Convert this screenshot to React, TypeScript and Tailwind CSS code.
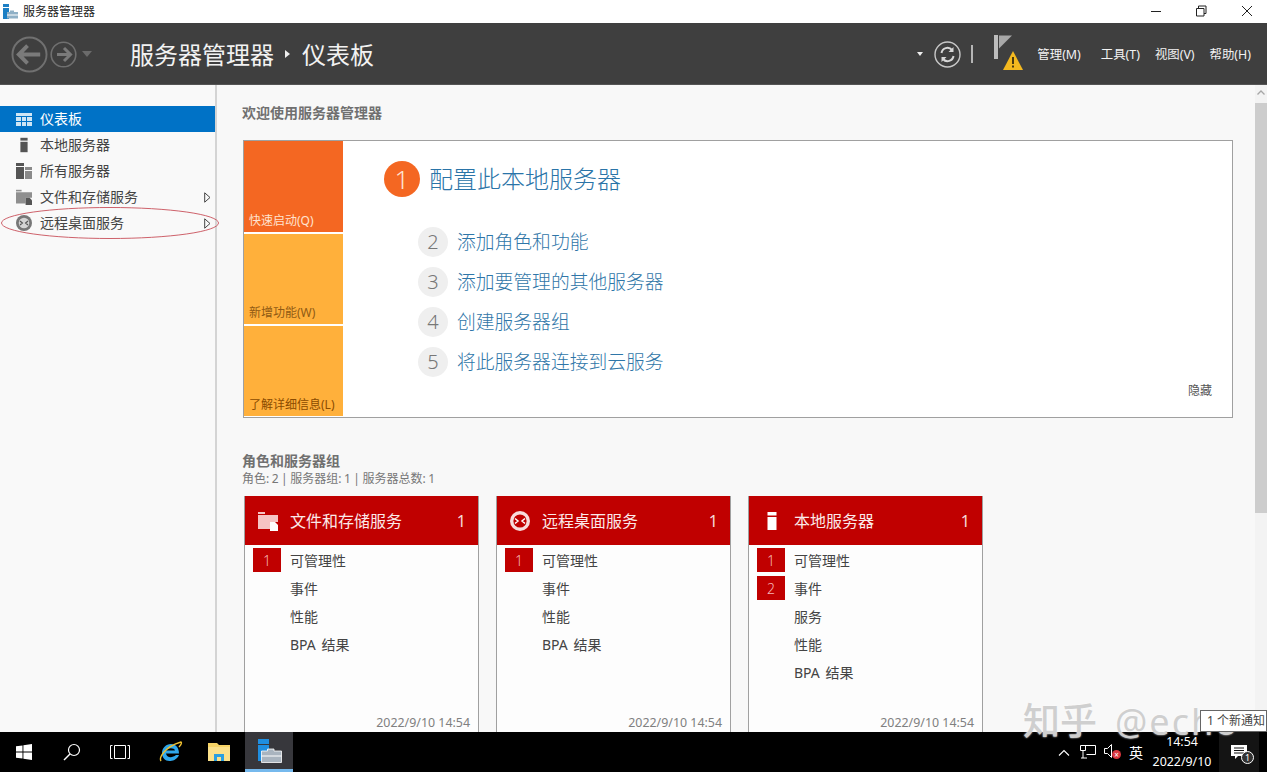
import React from "react";

const Server = ({ c = "#fff", className = "" }: { c?: string; className?: string }) => (
  <svg className={className} width="10" height="18" viewBox="0 0 10 18">
    <rect x="0.5" y="0" width="9" height="3.5" fill={c} />
    <rect x="0.5" y="5" width="9" height="13" fill={c} />
  </svg>
);

const FilesIcon = ({ a, b, size }: { a: string; b: string; size: number }) => (
  <svg width={size} height={size} viewBox="0 0 20 20">
    <path d="M0 1h7v2h-7z" fill={a} />
    <path d="M0 4h20v7h-8v7h-12z" fill={a} />
    <path d="M12 11h5l3 3v6h-8z" fill={b} />
  </svg>
);

const RemoteIcon = ({ ring, inner, arrow, size }: { ring: string; inner: string; arrow: string; size: number }) => (
  <svg width={size} height={size} viewBox="0 0 20 20">
    <circle cx="10" cy="10" r="10" fill={ring} />
    <circle cx="10" cy="10" r="6.6" fill={inner} />
    <path d="M5 7.500l3 2.500-3 2.500M15 7.500l-3 2.500 3 2.500" stroke={arrow} strokeWidth="1.5" fill="none" />
  </svg>
);

const Watermark = () => (
  <div className="pointer-events-none absolute left-[1023px] top-[703px] z-20 flex items-baseline whitespace-nowrap leading-[36px] text-[#cfcfcf] [text-shadow:0_0_2px_#ffffff]">
    <span className="text-[37px] font-medium">知乎</span>
    <span className="ml-[18px] text-[36px] tracking-[2px]">@echo</span>
  </div>
);

function SideItem({ icon, label, active, arrow }: { icon: React.ReactNode; label: string; active?: boolean; arrow?: boolean }) {
  return (
    <div className={`flex h-[26px] items-center ${active ? "bg-[#0072c6] text-white" : "text-[#444]"}`}>
      <div className="flex w-[40px] justify-center pl-[8px]">{icon}</div>
      <span className="flex-1 text-[14px] leading-[26px]">{label}</span>
      {arrow && (
        <svg className="mr-[4px]" width="7" height="11" viewBox="0 0 7 11">
          <path d="M0.7 0.8L6 5.5L0.7 10.2Z" fill="none" stroke="#444" strokeWidth="1" />
        </svg>
      )}
    </div>
  );
}

function Step({ n, label }: { n: number; label: string }) {
  return (
    <div className="flex h-[40px] items-center pl-[75px]">
      <div className="flex h-[30px] w-[30px] items-center justify-center rounded-full bg-[#efefef] text-[20px] font-light text-[#777]">{n}</div>
      <span className="ml-[9px] text-[18.8px] font-light text-[#2f76a8]">{label}</span>
    </div>
  );
}

function Card({ title, icon, rows }: { title: string; icon: React.ReactNode; rows: [string, number?][] }) {
  return (
    <div className="flex h-[250px] w-[235px] flex-col border-x border-[#a0a0a0] bg-[#fdfdfd]">
      <div className="flex h-[49px] items-center bg-[#c00000] text-white">
        <div className="flex w-[45px] justify-center pl-[1px]">{icon}</div>
        <span className="flex-1 text-[16px] text-[#fbe9e9]">{title}</span>
        <span className="mr-[12px] text-[16px] text-[#f6d9d9]">1</span>
      </div>
      <div className="flex flex-1 flex-col pt-[1px]">
        {rows.map(([r, n]) => (
          <div key={r} className="flex h-[28px] items-center text-[14px] text-[#444] [word-spacing:2px]">
            <div className="ml-[8px] flex h-[24px] w-[28px] items-center justify-center text-[14px] font-light">
              {n ? <span className="flex h-[24px] w-[28px] items-center justify-center bg-[#c00000] text-[#f7b5b5]">{n}</span> : null}
            </div>
            <span className="ml-[9px]">{r}</span>
          </div>
        ))}
        <div className="mt-auto mb-[14px] mr-[8px] text-right text-[12.4px] leading-[18px] text-[#808080]">2022/9/10 14:54</div>
      </div>
    </div>
  );
}

function Tile({ label, color, text, h }: { label: string; color: string; text: string; h: string }) {
  return (
    <div className={`flex ${h} items-end pb-[3px] pl-[5px] text-[12px] leading-[16px] ${color} ${text}`}>{label}</div>
  );
}

export default function App() {
  return (
    <div className="relative flex h-[772px] w-[1267px] flex-col overflow-hidden bg-white font-['Noto_Sans','Noto_Sans_CJK_SC',sans-serif]">
      {/* Title bar */}
      <div className="flex h-[23px] shrink-0 items-center bg-white pl-[3px]">
        <svg width="15" height="15" viewBox="0 0 15 15">
          <rect x="0" y="0" width="6" height="3" fill="#1c7fc4" />
          <rect x="0" y="4" width="6" height="11" fill="#1c7fc4" />
          <path d="M4 8h3v-1.500h4v1.500h4v6.500h-11z" fill="#8fb0c6" />
          <path d="M4 11h11" stroke="#fff" />
        </svg>
        <span className="ml-[5px] text-[12px] text-[#222]">服务器管理器</span>
        <div className="ml-auto flex items-center">
          <svg width="46" height="14" viewBox="0 0 46 14"><path d="M22 6.500h10" stroke="#222" /></svg>
          <svg width="46" height="14" viewBox="0 0 46 14"><path d="M21.500 3.500h7.500v7.500h-7.500zM23.500 3.500v-2.500h7.500v7.500h-2" fill="none" stroke="#222" /></svg>
          <svg width="46" height="14" viewBox="0 0 46 14"><path d="M21 1l10 10M31 1l-10 10" stroke="#222" /></svg>
        </div>
      </div>

      {/* Header */}
      <div className="flex h-[62px] shrink-0 items-center border-b border-[#555] bg-[#3f3f3f] pl-[11px] pt-[1px] text-white">
        <svg width="37" height="37" viewBox="0 0 38 38">
          <circle cx="19" cy="19" r="17.5" fill="none" stroke="#707070" strokeWidth="2" />
          <path d="M8 19h22M17 10l-9 9 9 9" fill="none" stroke="#7a7a7a" strokeWidth="4" />
        </svg>
        <svg className="ml-[2px]" width="27" height="27" viewBox="0 0 27 27">
          <circle cx="13.500" cy="13.500" r="12.300" fill="none" stroke="#707070" strokeWidth="1.600" />
          <path d="M20 13.500h-13M14 7l6.500 6.500-6.500 6.500" fill="none" stroke="#7a7a7a" strokeWidth="3" />
        </svg>
        <svg className="ml-[5px]" width="10" height="6" viewBox="0 0 10 6"><path d="M0 0h10l-5 6z" fill="#6b6b6b" /></svg>
        <span className="ml-[38px] mt-[2px] text-[24px] leading-[32px] text-[#f2f2f2]">服务器管理器</span>
        <svg className="ml-[11px] mr-[12px]" width="5" height="8" viewBox="0 0 5 8"><path d="M0 0l5 4-5 4z" fill="#eee" /></svg>
        <span className="mt-[2px] text-[24px] leading-[32px] text-[#f2f2f2]">仪表板</span>
        <svg className="ml-auto" width="6" height="4" viewBox="0 0 6 4"><path d="M0 0h6l-3 4z" fill="#eee" /></svg>
        <svg className="ml-[11px]" width="27" height="27" viewBox="0 0 27 27">
          <circle cx="13.500" cy="13.500" r="12.500" fill="none" stroke="#c8c8c8" strokeWidth="1.400" />
          <path d="M7.500 12a6 6 0 0 1 10.500-3M19.500 15a6 6 0 0 1-10.500 3" fill="none" stroke="#d8d8d8" strokeWidth="2" />
          <path d="M19.500 6v5h-5zM7.500 21v-5h5z" fill="#d8d8d8" />
        </svg>
        <div className="ml-[10px] h-[18px] w-[2px] bg-[#b5b5b5]" />
        <div className="relative ml-[21px] h-[36px] w-[30px]">
          <svg width="18" height="24" viewBox="0 0 18 24" className="absolute left-0 top-[-1px]">
            <rect x="0" y="0" width="4" height="24" fill="#bdbdbd" />
            <path d="M5 0.500h13l-13 13z" fill="#a8a8a8" />
          </svg>
          <svg width="20" height="19" viewBox="0 0 20 19" className="absolute left-[9px] top-[15px]">
            <path d="M10 0l10 19h-20z" fill="#f4b91f" />
            <path d="M9 6h2v7h-2zM9 14.500h2v2h-2z" fill="#4a3a10" />
          </svg>
        </div>
        <div className="ml-[13px] mt-[2px] flex text-[12.4px] text-[#f2f2f2]">
          <span>管理(M)</span>
          <span className="ml-[20px]">工具(T)</span>
          <span className="ml-[15px]">视图(V)</span>
          <span className="ml-[15px] mr-[16px]">帮助(H)</span>
        </div>
      </div>

      {/* Body */}
      <div className="flex min-h-0 flex-1">
        <div className="w-[215px] shrink-0 bg-[#f9f9f9] pt-[21px]">
          <SideItem active label="仪表板" icon={
            <svg width="16" height="13" viewBox="0 0 16 13"><path d="M0 0h16v3h-16zM0 4h5v4h-5zM6 4h4v4h-4zM11 4h5v4h-5zM0 9h5v4h-5zM6 9h4v4h-4zM11 9h5v4h-5z" fill="#cfe6f5" /></svg>
          } />
          <SideItem label="本地服务器" icon={<Server c="#555" className="h-[16px] w-[8px]" />} />
          <SideItem label="所有服务器" icon={
            <svg width="16" height="16" viewBox="0 0 16 16"><path d="M0 0h8v3h-8zM0 4h8v12h-8z" fill="#555" /><path d="M9 4h7v3h-7zM9 8h7v8h-7z" fill="#8a8a8a" /></svg>
          } />
          <SideItem arrow label="文件和存储服务" icon={<FilesIcon a="#8f8f8f" b="#555" size={16} />} />
          <SideItem arrow label="远程桌面服务" icon={<RemoteIcon ring="#777" inner="#d4d4d4" arrow="#555" size={16} />} />
        </div>
        <div className="w-[2px] shrink-0 bg-[#d4d4d4]" />
        <div className="min-w-0 flex-1 bg-[#f8f8f8] pl-[25px] pt-[18px]">
          <div className="text-[14px] font-bold leading-[20px] text-[#707070]">欢迎使用服务器管理器</div>
          <div className="ml-[1px] mt-[17px] flex h-[278px] w-[990px] border border-[#a0a0a0] bg-white">
            <div className="flex w-[99px] flex-col gap-[2px]">
              <Tile h="h-[91px]" color="bg-[#f46722]" text="text-[#ffe3d0]" label="快速启动(Q)" />
              <Tile h="h-[90px]" color="bg-[#ffb03b]" text="text-[#8f5a14]" label="新增功能(W)" />
              <Tile h="h-[90px]" color="bg-[#ffb03b]" text="text-[#8a4b00]" label="了解详细信息(L)" />
            </div>
            <div className="relative flex-1">
              <div className="flex items-center pl-[41px] pt-[20px]">
                <div className="flex h-[36px] w-[36px] items-center justify-center rounded-full bg-[#f46722] text-[26px] font-light text-[#ffe3d0]">1</div>
                <span className="ml-[9px] text-[24px] font-light leading-[36px] text-[#2a74a8]">配置此本地服务器</span>
              </div>
              <div className="mt-[25px]">
                <Step n={2} label="添加角色和功能" />
                <Step n={3} label="添加要管理的其他服务器" />
                <Step n={4} label="创建服务器组" />
                <Step n={5} label="将此服务器连接到云服务" />
              </div>
              <span className="absolute bottom-[17px] right-[20px] text-[12px] text-[#555]">隐藏</span>
            </div>
          </div>
          <div className="mt-[34px] text-[14px] font-bold leading-[18px] text-[#707070]">角色和服务器组</div>
          <div className="mt-[1px] text-[12px] leading-[16px] text-[#777] [word-spacing:-0.6px]">角色: 2 | 服务器组: 1 | 服务器总数: 1</div>
          <div className="ml-[2px] mt-[9px] flex gap-[17px]">
            <Card title="文件和存储服务" icon={<FilesIcon a="#f6c4c4" b="#fff" size={20} />} rows={[["可管理性", 1], ["事件"], ["性能"], ["BPA 结果"]]} />
            <Card title="远程桌面服务" icon={<RemoteIcon ring="#f8dcdc" inner="#c00000" arrow="#fff" size={20} />} rows={[["可管理性", 1], ["事件"], ["性能"], ["BPA 结果"]]} />
            <Card title="本地服务器" icon={<Server />} rows={[["可管理性", 1], ["事件", 2], ["服务"], ["性能"], ["BPA 结果"]]} />
          </div>
        </div>
        {/* Scrollbar */}
        <div className="flex w-[12px] shrink-0 flex-col items-center bg-[#f3f3f3] pt-[5px]">
          <svg width="8" height="5" viewBox="0 0 8 5"><path d="M0.500 4.500l3.500-3.500 3.500 3.500" fill="none" stroke="#a6a6a6" strokeWidth="1.300" /></svg>
          <div className="mt-[8px] h-[410px] w-full bg-[#cdcdcd]" />
        </div>
      </div>

      {/* Taskbar */}
      <div className="z-10 flex h-[40px] shrink-0 items-center bg-black text-white">
        <div className="flex h-[40px] w-[48px] items-center justify-center">
          <svg width="16" height="16" viewBox="0 0 16 16"><path d="M0 2.300l6.500-.9v6.200h-6.500zM7.400 1.300l8.600-1.300v7.600h-8.600zM0 8.400h6.500v6.200l-6.500-.9zM7.400 8.400h8.600v7.600l-8.600-1.300z" fill="#fff" /></svg>
        </div>
        <div className="flex h-[40px] w-[48px] items-center justify-center">
          <svg width="18" height="18" viewBox="0 0 18 18"><circle cx="11" cy="7" r="5.500" fill="none" stroke="#fff" strokeWidth="1.200" /><path d="M7 11l-6 6" stroke="#fff" strokeWidth="1.400" /></svg>
        </div>
        <div className="flex h-[40px] w-[48px] items-center justify-center">
          <svg width="20" height="14" viewBox="0 0 20 14"><path d="M2.500.5h-2v13h2M17.500.5h2v13h-2M4.500.5h11v13h-11z" fill="none" stroke="#fff" /></svg>
        </div>
        <div className="flex h-[40px] w-[48px] items-center justify-center pl-[6px]">
          <svg width="24" height="24" viewBox="0 0 24 24">
            <path d="M3 13c0-5 4-9 9-9s8 4 8 9.500h-13c.5 4 6 5 10 1.500h3c-2 5-7 6-9.500 6-4.500 0-7.500-3.500-7.500-8zM7 10.500h9c-.5-3-7.500-3-9 0z" fill="#2fa8ec" />
            <path d="M2 21c-2-3 3-14 20-19 1 1 0 3-2 5" fill="none" stroke="#f0c030" strokeWidth="1.400" />
          </svg>
        </div>
        <div className="ml-[3px] flex h-[40px] w-[48px] items-center justify-center">
          <svg width="22" height="18" viewBox="0 0 22 18">
            <path d="M0 0h9l2 2h11v16h-22z" fill="#f6d365" />
            <path d="M0 4h22v14h-22z" fill="#fbe08a" />
            <path d="M6 18v-7h10v7h-3v-4h-4v4z" fill="#2a9fe0" />
          </svg>
        </div>
        <div className="ml-[2px] flex h-[40px] w-[48px] flex-col items-center justify-center border-b-[3px] border-[#76b9ed] bg-[#37373c] pl-[1px]">
          <svg width="24" height="24" viewBox="0 0 24 24">
            <rect x="0" y="0" width="11" height="5" fill="#1f8ee0" />
            <rect x="0" y="6" width="11" height="16" fill="#1f8ee0" />
            <path d="M3.500 12h6v-2h6.500v2h7.500v11.500h-20z" fill="#a9b4bf" stroke="#fff" strokeWidth="0.800" />
            <path d="M3.500 17h20" stroke="#fff" />
          </svg>
        </div>
        <div className="ml-auto flex h-[40px] items-center">
          <svg width="12" height="7" viewBox="0 0 12 7"><path d="M1 6.500l5-5 5 5" fill="none" stroke="#fff" strokeWidth="1.100" /></svg>
          <svg className="ml-[10px]" width="16" height="14" viewBox="0 0 16 14"><path d="M3 .5h12.500v9h-9M.5 .5h5v5h-5zM3 5.500v7.500M1 13h6" fill="none" stroke="#fff" /></svg>
          <div className="relative ml-[8px] h-[16px] w-[18px]">
            <svg width="10" height="14" viewBox="0 0 10 14"><path d="M.5 4.500h3l4-4v13l-4-4h-3z" fill="none" stroke="#fff" /></svg>
            <div className="absolute left-[8px] top-[6px] flex h-[9px] w-[9px] items-center justify-center rounded-full bg-[#d9363e] text-[8px] leading-[9px]">×</div>
          </div>
          <span className="ml-[7px] text-[14px]">英</span>
          <div className="ml-[2px] flex w-[74px] flex-col items-center text-[12.4px] leading-[20px] text-white">
            <span>14:54</span>
            <span>2022/9/10</span>
          </div>
          <div className="relative flex h-[40px] w-[40px] items-center justify-center bg-[#141414]">
            <svg width="16" height="14" viewBox="0 0 16 14"><path d="M0 0h16v11h-9l-3 3v-3h-4z" fill="#fff" /><path d="M3 3h10M3 5.500h10M3 8h10" stroke="#111" /></svg>
            <div className="absolute left-[22px] top-[19px] flex h-[13px] w-[13px] items-center justify-center rounded-full border border-white bg-[#333] text-[9px] leading-none">1</div>
          </div>
          <div className="w-[8px]" />
        </div>
      </div>

      {/* Annotation ellipse over the sidebar */}
      <svg className="pointer-events-none absolute left-0 top-[205px]" width="222" height="36" viewBox="0 0 222 36">
        <ellipse cx="110" cy="18" rx="108.500" ry="15.500" fill="none" stroke="#c8505a" strokeWidth="0.900" />
      </svg>
      {/* Tooltip */}
      <div className="absolute left-[1200px] top-[710px] z-30 h-[22px] w-[67px] overflow-hidden whitespace-nowrap border border-[#666] bg-white pl-[6px] text-[12px] leading-[20px] text-[#444]">1 个新通知</div>
      <Watermark />
    </div>
  );
}
